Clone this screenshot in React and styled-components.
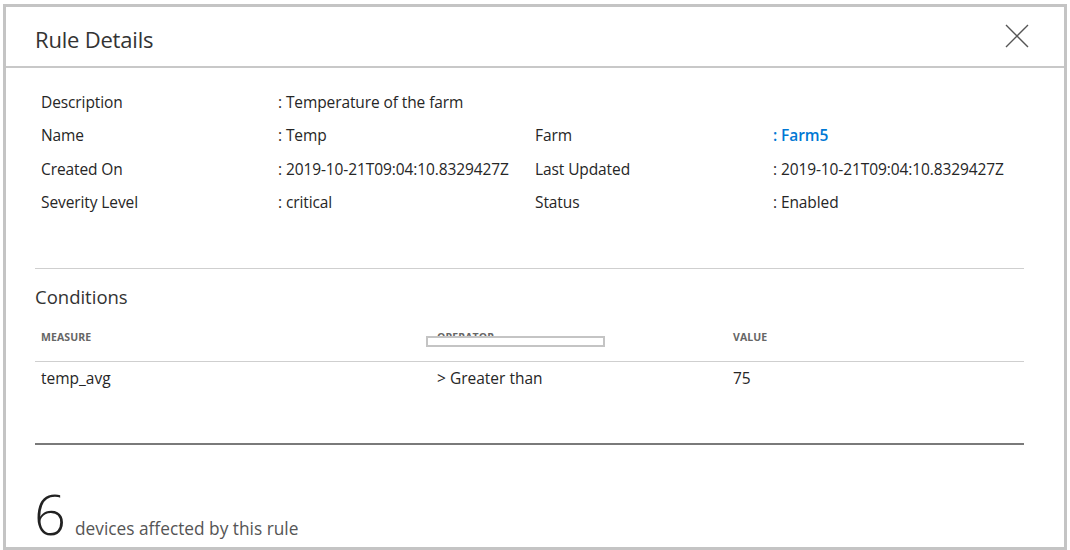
import styled, { createGlobalStyle } from "styled-components";

const GlobalStyle = createGlobalStyle`
  html, body {
    margin: 0;
    padding: 0;
    background: #ffffff;
  }
  body {
    font-family: "Open Sans", "Noto Sans", sans-serif;
    color: #333333;
  }
`;

const Modal = styled.div`
  box-sizing: border-box;
  width: 1064px;
  height: 546px;
  margin: 4px 0 0 3px;
  border: 3px solid #c4c4c4;
  background: #ffffff;
  display: flex;
  flex-direction: column;
  overflow: hidden;
`;

const Header = styled.div`
  height: 59px;
  display: flex;
  align-items: center;
  justify-content: space-between;
  padding: 0 34px 0 29px;
  border-bottom: 2px solid #c8c8c8;
`;

const Title = styled.h1`
  margin: 5px 0 0;
  font-size: 22px;
  font-weight: 400;
  color: #333333;
  letter-spacing: -0.2px;
`;

const CloseButton = styled.button`
  border: 0;
  background: none;
  padding: 0;
  width: 26px;
  height: 26px;
  display: flex;
  align-items: center;
  justify-content: center;
  cursor: pointer;
  margin-top: -2px;
`;

const Body = styled.div`
  padding: 17px 40px 0 29px;
  display: flex;
  flex-direction: column;
`;

const DetailsGrid = styled.div`
  display: grid;
  grid-template-columns: 237px 257px 238px 1fr;
  grid-auto-rows: 33.5px;
  align-items: center;
  padding-left: 6px;
  font-size: 15.5px;
`;

const Label = styled.div`
  color: #262626;
  letter-spacing: -0.1px;
`;

const Value = styled.div`
  color: ${({ link }) => (link ? "#0078d4" : "#262626")};
  font-weight: ${({ link }) => (link ? 600 : 400)};
  letter-spacing: -0.1px;
`;

const Divider = styled.hr`
  border: 0;
  margin: ${({ top }) => top}px 0 0;
  height: ${({ strong }) => (strong ? "2px" : "1px")};
  background: ${({ strong }) => (strong ? "#7a7a7a" : "#cfcfcf")};
`;

const SectionTitle = styled.h2`
  margin: 16px 0 0;
  font-size: 18.5px;
  line-height: 24px;
  font-weight: 400;
  color: #333333;
`;

const Table = styled.table`
  width: 100%;
  border-collapse: collapse;
  margin-top: 4px;
  table-layout: fixed;
`;

const HeadCell = styled.th`
  position: relative;
  box-sizing: border-box;
  width: ${({ w }) => w || "auto"};
  height: 48px;
  padding: 0 6px;
  text-align: left;
  font-size: 10.5px;
  font-weight: 700;
  color: #666666;
  letter-spacing: 0.1px;
  border-bottom: 1px solid #cfcfcf;
`;

const FocusBox = styled.span`
  position: absolute;
  left: -5px;
  top: 23px;
  width: 175px;
  height: 7px;
  border: 2px solid #c4c4c4;
  background: #ffffff;
`;

const Cell = styled.td`
  box-sizing: border-box;
  height: 34px;
  padding: 0 6px;
  font-size: 15.5px;
  color: #262626;
`;

const Footer = styled.div`
  display: flex;
  align-items: baseline;
  gap: 9px;
  padding: 35px 0 0 0;
  margin-left: -1px;
`;

const Count = styled.span`
  font-size: 56px;
  line-height: 66px;
  font-weight: 300;
  color: #222222;
`;

const CountText = styled.span`
  font-size: 17.3px;
  color: #555555;
`;

const details = [
  ["Description", "Temperature of the farm"],
  ["Name", "Temp", "Farm", "Farm5", true],
  ["Created On", "2019-10-21T09:04:10.8329427Z", "Last Updated", "2019-10-21T09:04:10.8329427Z"],
  ["Severity Level", "critical", "Status", "Enabled"],
];

export default function App() {
  return (
    <>
      <GlobalStyle />
      <Modal>
        <Header>
          <Title>Rule Details</Title>
          <CloseButton aria-label="Close">
            <svg width="24" height="24" viewBox="0 0 24 24">
              <path d="M1 1 L23 23 M23 1 L1 23" stroke="#555" strokeWidth="1.4" fill="none" />
            </svg>
          </CloseButton>
        </Header>
        <Body>
          <DetailsGrid>
            {details.flatMap(([l1, v1, l2, v2, link]) => [
              <Label key={l1}>{l1}</Label>,
              <Value key={l1 + "v"}>: {v1}</Value>,
              l2 ? <Label key={l1 + "l2"}>{l2}</Label> : <div key={l1 + "e1"} />,
              v2 ? (
                <Value key={l1 + "v2"} link={link}>
                  : {v2}
                </Value>
              ) : (
                <div key={l1 + "e2"} />
              ),
            ])}
          </DetailsGrid>
          <Divider top={49} />
          <SectionTitle>Conditions</SectionTitle>
          <Table>
            <thead>
              <tr>
                <HeadCell w="396px">MEASURE</HeadCell>
                <HeadCell w="296px">
                  OPERATOR
                  <FocusBox />
                </HeadCell>
                <HeadCell>VALUE</HeadCell>
              </tr>
            </thead>
            <tbody>
              <tr>
                <Cell>temp_avg</Cell>
                <Cell>&gt; Greater than</Cell>
                <Cell>75</Cell>
              </tr>
            </tbody>
          </Table>
          <Divider top={48} strong />
          <Footer>
            <Count>6</Count>
            <CountText>devices affected by this rule</CountText>
          </Footer>
        </Body>
      </Modal>
    </>
  );
}
